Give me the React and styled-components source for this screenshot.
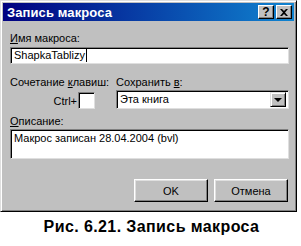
import React from 'react';
import styled, { createGlobalStyle } from 'styled-components';

const GlobalStyle = createGlobalStyle`
  html, body {
    margin: 0;
    padding: 0;
    background: #ffffff;
  }
  body {
    font-family: "Liberation Sans", Arial, sans-serif;
  }
`;

const Page = styled.div`
  width: 301px;
  height: 246px;
  overflow: hidden;
  display: flex;
  flex-direction: column;
`;

const Dialog = styled.div`
  box-sizing: border-box;
  width: 297px;
  height: 212px;
  background: #c0c0c0;
  border: 1px solid;
  border-color: #dfdfdf #000000 #000000 #dfdfdf;
  box-shadow: inset 1px 1px 0 #ffffff, inset -1px -1px 0 #808080;
  padding: 2px;
  display: flex;
  flex-direction: column;
`;

const TitleBar = styled.div`
  height: 18px;
  display: flex;
  align-items: center;
  justify-content: space-between;
  padding: 0 2px 0 4px;
  background: linear-gradient(90deg, #000080 0%, #1084d0 100%);
`;

const Title = styled.span`
  color: #ffffff;
  font-weight: bold;
  font-size: 13px;
  letter-spacing: 0.1px;
`;

const TitleButtons = styled.div`
  display: flex;
  gap: 2px;
`;

const TitleButton = styled.div`
  box-sizing: border-box;
  width: 16px;
  height: 14px;
  background: #c0c0c0;
  border: 1px solid;
  border-color: #ffffff #000000 #000000 #ffffff;
  box-shadow: inset -1px -1px 0 #808080;
  display: flex;
  align-items: center;
  justify-content: center;
  color: #000000;
  font-weight: bold;
  font-size: 12px;
  line-height: 1;
`;

const Body = styled.div`
  flex: 1;
  display: flex;
  flex-direction: column;
  padding: 10px 5px 7px 7px;
`;

const Label = styled.div`
  font-size: 11px;
  line-height: 14px;
  color: #000000;
  white-space: nowrap;
  margin-bottom: ${(p) => p.$gap || 2}px;
`;

const Key = styled.span`
  text-decoration: underline;
`;

const Sunken = styled.div`
  box-sizing: border-box;
  background: #ffffff;
  border: 1px solid;
  border-color: #808080 #dfdfdf #dfdfdf #808080;
  box-shadow: inset 1px 1px 0 #000000, inset -1px -1px 0 #ffffff;
  font-size: 11px;
  line-height: 13px;
  color: #000000;
  padding: 2px 3px;
  height: ${(p) => p.$h}px;
  width: ${(p) => (p.$w ? `${p.$w}px` : 'auto')};
  display: flex;
  align-items: ${(p) => (p.$top ? 'flex-start' : 'center')};
`;

const Caret = styled.span`
  display: inline-block;
  width: 1px;
  height: 13px;
  background: #000000;
  margin-left: 1px;
`;

const Row = styled.div`
  display: grid;
  grid-template-columns: 106px 1fr;
  margin-top: 11px;
`;

const Column = styled.div`
  display: flex;
  flex-direction: column;
`;

const CtrlLine = styled.div`
  display: flex;
  align-items: center;
  justify-content: flex-end;
  padding-right: 21px;
  margin-top: 1px;
  font-size: 11px;
`;

const CtrlText = styled.span`
  margin-right: 1px;
`;

const Select = styled(Sunken)`
  padding: 2px 2px 2px 3px;
  justify-content: space-between;
`;

const DropButton = styled.div`
  box-sizing: border-box;
  width: 16px;
  height: 15px;
  background: #c0c0c0;
  border: 1px solid;
  border-color: #dfdfdf #000000 #000000 #dfdfdf;
  box-shadow: inset 1px 1px 0 #ffffff, inset -1px -1px 0 #808080;
  display: flex;
  align-items: center;
  justify-content: center;
`;

const Arrow = styled.div`
  width: 0;
  height: 0;
  border-left: 4px solid transparent;
  border-right: 4px solid transparent;
  border-top: 4px solid #000000;
`;

const Section = styled.div`
  margin-top: ${(p) => p.$mt}px;
  display: flex;
  flex-direction: column;
`;

const Buttons = styled.div`
  margin-top: auto;
  display: flex;
  justify-content: flex-end;
  gap: 6px;
  padding-right: 1px;
`;

const Button = styled.div`
  box-sizing: border-box;
  width: 74px;
  height: 23px;
  background: #c0c0c0;
  border: 1px solid;
  border-color: #ffffff #000000 #000000 #ffffff;
  box-shadow: inset -1px -1px 0 #808080, inset 1px 1px 0 #dfdfdf;
  display: flex;
  align-items: center;
  justify-content: center;
  font-size: 11px;
  color: #000000;
`;

const Caption = styled.div`
  text-align: center;
  margin-top: 6px;
  padding-left: 2px;
  font-family: "Liberation Sans Narrow", "Liberation Sans", Arial, sans-serif;
  font-stretch: condensed;
  font-weight: bold;
  font-size: 16px;
  letter-spacing: 0.4px;
  line-height: 18px;
  color: #000000;
`;

export default function App() {
  return (
    <Page>
      <GlobalStyle />
      <Dialog>
        <TitleBar>
          <Title>Запись макроса</Title>
          <TitleButtons>
            <TitleButton>?</TitleButton>
            <TitleButton>
              <svg width="8" height="7" viewBox="0 0 8 7">
                <path d="M0 0h2l2 2 2-2h2L5 3.5 8 7H6L4 5 2 7H0l3-3.5z" fill="#000" />
              </svg>
            </TitleButton>
          </TitleButtons>
        </TitleBar>
        <Body>
          <Label>
            <Key>И</Key>мя макроса:
          </Label>
          <Sunken $h={17}>
            ShapkaTablizy
            <Caret />
          </Sunken>
          <Row>
            <Column>
              <Label>
                Сочетание <Key>к</Key>лавиш:
              </Label>
              <CtrlLine>
                <CtrlText>Ctrl+</CtrlText>
                <Sunken $h={17} $w={17} />
              </CtrlLine>
            </Column>
            <Column>
              <Label $gap={1}>
                Сохранить <Key>в</Key>:
              </Label>
              <Select $h={19}>
                Эта книга
                <DropButton>
                  <Arrow />
                </DropButton>
              </Select>
            </Column>
          </Row>
          <Section $mt={5}>
            <Label $gap={1}>
              <Key>О</Key>писание:
            </Label>
            <Sunken $h={30} $top>
              Макрос записан 28.04.2004 (bvl)
            </Sunken>
          </Section>
          <Buttons>
            <Button>OK</Button>
            <Button>Отмена</Button>
          </Buttons>
        </Body>
      </Dialog>
      <Caption>Рис. 6.21. Запись макроса</Caption>
    </Page>
  );
}
